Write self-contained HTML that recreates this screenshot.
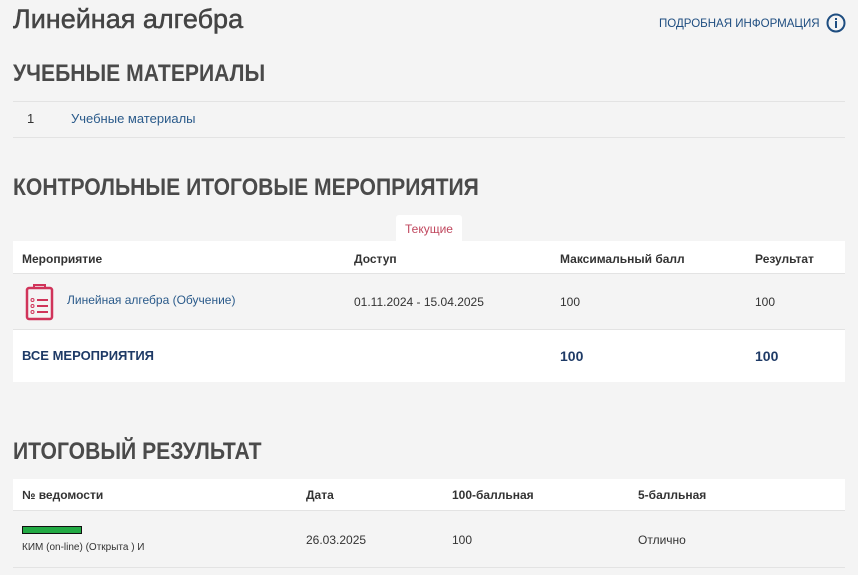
<!DOCTYPE html>
<html><head><meta charset="utf-8"><style>
body{margin:0;width:858px;height:575px;background:#f4f4f4;font-family:"Liberation Sans","Noto Sans CJK SC",sans-serif;color:#333;position:relative;overflow:hidden}
.a{position:absolute;white-space:nowrap}
.h{font-weight:bold;color:#4a4a4a;transform-origin:0 0;transform:scaleX(.88)}
.w{position:absolute;background:#fff;left:13px;width:832px}
.line{position:absolute;left:13px;width:832px;height:1px;background:#e3e3e3}
.th{font-size:12px;font-weight:bold;color:#333}
.td{font-size:12px;color:#333}
.lk{color:#2a5a8a}
</style></head><body>
<div class="a" style="left:13px;top:4px;font-size:27px;color:#444;-webkit-text-stroke:0.5px #444">Линейная алгебра</div>
<div class="a" style="left:659px;top:16px;font-size:12px;color:#1e4d80;transform:scaleX(.96);transform-origin:0 0">ПОДРОБНАЯ ИНФОРМАЦИЯ</div>
<svg class="a" style="left:826px;top:13px" width="20" height="20"><circle cx="10" cy="10" r="8.5" fill="none" stroke="#1e4d80" stroke-width="2"/><rect x="9" y="8" width="2" height="7" fill="#1e4d80"/><rect x="9" y="5" width="2" height="2" fill="#1e4d80"/></svg>
<div class="a h" style="left:13px;top:60px;font-size:24px">УЧЕБНЫЕ МАТЕРИАЛЫ</div>
<div class="line" style="top:101px"></div>
<div class="a td" style="left:27px;top:111px;font-size:13px">1</div>
<div class="a td lk" style="left:71px;top:111px;font-size:13px">Учебные материалы</div>
<div class="line" style="top:137px"></div>
<div class="a h" style="left:13px;top:174px;font-size:24px">КОНТРОЛЬНЫЕ ИТОГОВЫЕ МЕРОПРИЯТИЯ</div>
<div class="a" style="left:396px;top:215px;width:66px;height:26px;background:#fff;border-radius:3px 3px 0 0"></div>
<div class="a" style="left:405px;top:222px;font-size:12px;color:#c0475e">Текущие</div>
<div class="w" style="top:241px;height:32px;border-bottom:1px solid #e3e3e3"></div>
<div class="a th" style="left:22px;top:252px">Мероприятие</div>
<div class="a th" style="left:354px;top:252px">Доступ</div>
<div class="a th" style="left:560px;top:252px">Максимальный балл</div>
<div class="a th" style="left:755px;top:252px">Результат</div>
<div class="line" style="top:329px"></div>
<svg class="a" style="left:24px;top:283px" width="32" height="38"><rect x="3" y="5" width="25" height="31" rx="2" fill="none" stroke="#d0345a" stroke-width="2.5"/><path d="M10 5h11v-3h-11z" fill="none" stroke="#d0345a" stroke-width="2"/><circle cx="8.5" cy="17" r="1.5" fill="none" stroke="#d0345a"/><circle cx="8.5" cy="23" r="1.5" fill="none" stroke="#d0345a"/><circle cx="8.5" cy="29" r="1.5" fill="none" stroke="#d0345a"/><path d="M13 17h11M13 23h11M13 29h11" stroke="#d0345a" stroke-width="2"/></svg>
<div class="a td lk" style="left:67px;top:293px">Линейная алгебра (Обучение)</div>
<div class="a td" style="left:354px;top:295px">01.11.2024 - 15.04.2025</div>
<div class="a td" style="left:560px;top:295px">100</div>
<div class="a td" style="left:755px;top:295px">100</div>
<div class="w" style="top:330px;height:52px"></div>
<div class="a" style="left:22px;top:348px;font-size:13px;font-weight:bold;color:#1e3a66">ВСЕ МЕРОПРИЯТИЯ</div>
<div class="a" style="left:560px;top:348px;font-size:14px;font-weight:bold;color:#1e3a66">100</div>
<div class="a" style="left:755px;top:348px;font-size:14px;font-weight:bold;color:#1e3a66">100</div>
<div class="a h" style="left:13px;top:438px;font-size:24px">ИТОГОВЫЙ РЕЗУЛЬТАТ</div>
<div class="w" style="top:479px;height:31px;border-bottom:1px solid #e3e3e3"></div>
<div class="a th" style="left:22px;top:488px">№ ведомости</div>
<div class="a th" style="left:306px;top:488px">Дата</div>
<div class="a th" style="left:452px;top:488px">100-балльная</div>
<div class="a th" style="left:638px;top:488px">5-балльная</div>
<div class="a" style="left:22px;top:526px;width:58px;height:6px;background:#22aa44;border:1px solid #111"></div>
<div class="a" style="left:22px;top:542px;font-size:10px;color:#333">КИМ (on-line) (Открыта ) И</div>
<div class="a td" style="left:306px;top:533px">26.03.2025</div>
<div class="a td" style="left:452px;top:533px">100</div>
<div class="a td" style="left:638px;top:533px">Отлично</div>
<div class="line" style="top:567px"></div>
</body></html>
